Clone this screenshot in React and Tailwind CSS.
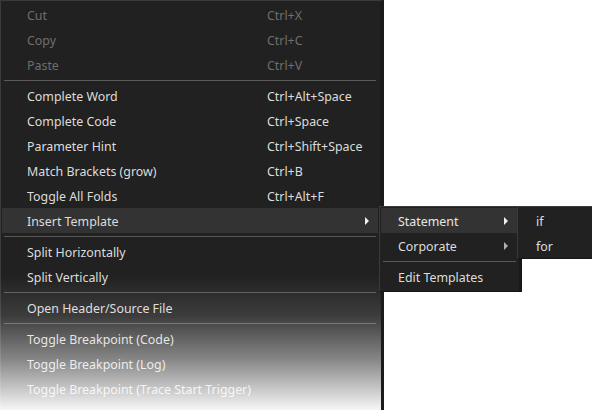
import React from "react";

const font = { fontFamily: '"Noto Sans", "Open Sans", sans-serif' };

function Arrow({ className = "" }) {
  return (
    <svg width="4" height="8" viewBox="0 0 4 8" className={className}>
      <path d="M0 0 L4 4 L0 8 Z" fill="currentColor" />
    </svg>
  );
}

function Row({ label, shortcut, disabled, active, arrow }) {
  return (
    <div
      className={`flex h-[25px] items-center pl-[25px] pr-[9px] pt-[3px] ${
        active ? "bg-[#333333]" : ""
      } ${disabled ? "text-[#6e6e6e]" : "text-[#dcdcdc]"}`}
    >
      <span className="w-[240px] shrink-0 whitespace-nowrap">{label}</span>
      <span className="whitespace-nowrap">{shortcut}</span>
      {arrow && <Arrow className="-mt-[3px] ml-auto text-[#f0f0f0]" />}
    </div>
  );
}

function Sep() {
  return <div className="mx-[2px] mt-[3px] mb-[2px] h-px bg-[#5a5a5a]" />;
}

export default function App() {
  return (
    <div
      className="relative h-[410px] w-[592px] overflow-hidden bg-white text-[12.4px] leading-none"
      style={font}
    >
      <div className="relative h-[410px] w-[384px] border-l border-t border-r-4 border-[#3a3a3a] border-r-[#1b1b1b] bg-[#212121] pl-px pr-[2px] pt-px">
        <Row label="Cut" shortcut="Ctrl+X" disabled />
        <Row label="Copy" shortcut="Ctrl+C" disabled />
        <Row label="Paste" shortcut="Ctrl+V" disabled />
        <Sep />
        <Row label="Complete Word" shortcut="Ctrl+Alt+Space" />
        <Row label="Complete Code" shortcut="Ctrl+Space" />
        <Row label="Parameter Hint" shortcut="Ctrl+Shift+Space" />
        <Row label="Match Brackets (grow)" shortcut="Ctrl+B" />
        <Row label="Toggle All Folds" shortcut="Ctrl+Alt+F" />
        <Row label="Insert Template" active arrow />
        <Sep />
        <Row label="Split Horizontally" />
        <Row label="Split Vertically" />
        <Sep />
        <Row label="Open Header/Source File" />
        <Sep />
        <Row label="Toggle Breakpoint (Code)" />
        <Row label="Toggle Breakpoint (Log)" />
        <Row label="Toggle Breakpoint (Trace Start Trigger)" />
        <div className="pointer-events-none absolute inset-x-[-1px] bottom-0 h-[135px] bg-[linear-gradient(to_bottom,rgba(255,255,255,0)_0%,rgba(255,255,255,0.12)_30%,rgba(255,255,255,0.45)_62%,rgba(255,255,255,0.96)_100%)]" />
      </div>

      {/* Submenu 1 */}
      <div className="absolute left-[379px] top-[206px] w-[143px] border border-[#3a3a3a] border-b-[#161616] border-r-[3px] border-r-[#181818] bg-[#212121] px-px pb-[2px] pt-px">
        <div className="flex h-[25px] items-center bg-[#333333] pl-[17px] pr-[10px] pt-[3px] text-[#e6e6e6]">
          <span>Statement</span>
          <Arrow className="-mt-[3px] ml-auto text-[#f0f0f0]" />
        </div>
        <div className="flex h-[25px] items-center pl-[17px] pr-[10px] pt-[3px] text-[#dcdcdc]">
          <span>Corporate</span>
          <Arrow className="-mt-[3px] ml-auto text-[#b0b0b0]" />
        </div>
        <div className="mx-[2px] mt-[3px] mb-[2px] h-px bg-[#5a5a5a]" />
        <div className="flex h-[25px] items-center pl-[17px] pt-[3px] text-[#dcdcdc]">
          <span>Edit Templates</span>
        </div>
      </div>

      {/* Submenu 2 */}
      <div className="absolute left-[517px] top-[206px] w-[90px] border border-[#3a3a3a] border-b-[#161616] bg-[#212121] px-px pt-px">
        <div className="flex h-[25px] items-center pl-[17px] pt-[3px] text-[#dcdcdc]">if</div>
        <div className="flex h-[25px] items-center pl-[17px] pt-[3px] text-[#dcdcdc]">for</div>
      </div>
    </div>
  );
}
